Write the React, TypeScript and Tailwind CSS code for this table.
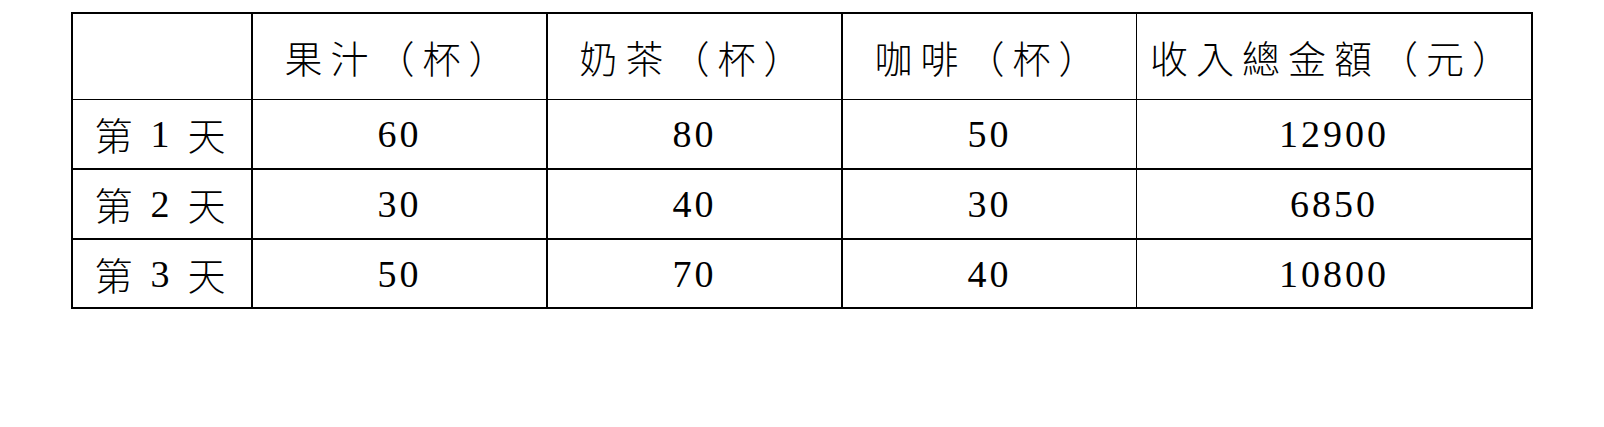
const headers = ['果汁（杯）', '奶茶（杯）', '咖啡（杯）', '收入總金額（元）'];

const rows = [
  { n: '1', values: ['60', '80', '50', '12900'] },
  { n: '2', values: ['30', '40', '30', '6850'] },
  { n: '3', values: ['50', '70', '40', '10800'] },
];

// right border per column, measured off the reference
const colBorder = ['border-r-2', 'border-r-2', 'border-r-2', 'border-r', 'border-r-2'];
// bottom border per row (header + 3 body rows)
const rowBorder = ['border-b', 'border-b-2', 'border-b-2', 'border-b-2'];

const cjk = "font-['Noto_Sans_CJK_TC','Noto_Sans_CJK_SC',sans-serif]";
const num = "font-['Liberation_Serif','Times_New_Roman','DejaVu_Serif',serif]";

export default function App() {
  return (
    <div className="w-[1604px] h-[427px] bg-white text-black pt-[12px] pl-[71px]">
      <div className="grid w-fit grid-cols-[180px_295px_295px_294px_396px] grid-rows-[86px_70px_70px_69px] border-l-2 border-t-2 border-black">
        {/* Header row */}
        <div className={`${colBorder[0]} ${rowBorder[0]} border-black`} />
        {headers.map((h, i) => (
          <div
            key={h}
            className={`${colBorder[i + 1]} ${rowBorder[0]} ${cjk} border-black flex items-center justify-center text-[38px] font-light leading-none tracking-[8px] whitespace-nowrap`}
          >
            {h}
          </div>
        ))}

        {/* Body rows */}
        {rows.map((r, ri) => (
          <div key={r.n} className="contents">
            <div
              className={`${colBorder[0]} ${rowBorder[ri + 1]} border-black flex items-center justify-center text-[38px] leading-none pr-[4px]`}
            >
              <span className={`${cjk} font-light`}>第</span>
              <span className={`${num} mx-[18px]`}>{r.n}</span>
              <span className={`${cjk} font-light`}>天</span>
            </div>
            {r.values.map((v, vi) => (
              <div
                key={vi}
                className={`${colBorder[vi + 1]} ${rowBorder[ri + 1]} ${num} border-black flex items-center justify-center text-[38px] leading-none tracking-[3px]`}
              >
                {v}
              </div>
            ))}
          </div>
        ))}
      </div>
    </div>
  );
}
